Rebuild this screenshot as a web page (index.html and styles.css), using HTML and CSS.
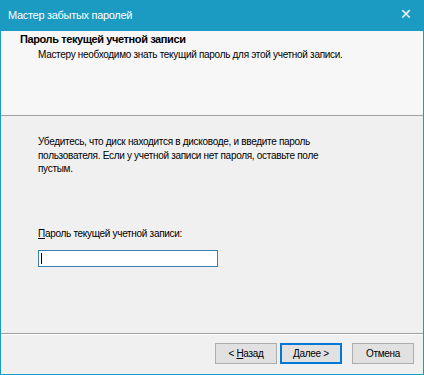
FILE: index.html
```
<!DOCTYPE html>
<html>
<head>
<title>Мастер забытых паролей</title>
<meta charset="utf-8">
<link rel="stylesheet" href="styles.css">
</head>
<body>
<div class=wnd>
 <div class=caption>
  <span class=ctitle>Мастер забытых паролей</span>
  <span class=cclose>&#x2715;</span>
 </div>
 <div class=head>
  <div class=htitle>Пароль текущей учетной записи</div>
  <div class=hsub>Мастеру необходимо знать текущий пароль для этой учетной записи.</div>
 </div>
 <div class=page>
  <p class=info>Убедитесь, что диск находится в дисководе, и введите пароль пользователя. Если у учетной записи нет пароля, оставьте поле пустым.</p>
  <label class=lbl><u>П</u>ароль текущей учетной записи:</label>
  <div class=edit><span class=caret></span></div>
 </div>
 <div class=foot>
  <button class=btn>&lt; <u>Н</u>азад</button>
  <button class="btn def"><u>Д</u>алее &gt;</button>
  <button class="btn cancel">Отмена</button>
 </div>
</div>
</body>
</html>
```
FILE: styles.css
```
html, body {margin:0; padding:0; background:#f0f0f0;}
body {font-family:"Liberation Sans", Arial, sans-serif; font-size:10px; letter-spacing:-0.3px; color:#000;}
.wnd {
 width:424px;
 height:375px;
 box-sizing:border-box;
 border:solid 1px #1b9ac2;
 border-top:none;
 display:flex;
 flex-direction:column;
 background:#f0f0f0;
}
.caption {
 height:31px;
 margin:0 -1px;
 background:#1b9ac2;
 color:#fff;
 display:flex;
 align-items:center;
 justify-content:space-between;
 padding:0 12px 0 8px;
 flex:none;
}
.ctitle {font-size:11px; letter-spacing:-0.3px; margin-top:-2px;}
.cclose {font-size:14px; margin-top:-4px; letter-spacing:0;}
.head {
 height:85px;
 box-sizing:border-box;
 background:#f7f7f7;
 border-bottom:solid 1px #a0a0a0;
 padding:2px 0 0 19px;
 flex:none;
}
.htitle {font-weight:bold; font-size:11px; letter-spacing:-0.4px; line-height:13px;}
.hsub {margin:2px 0 0 18px; line-height:13px;}
.page {
 flex:1;
 padding:19px 40px 0 37px;
 border-bottom:solid 1px #a0a0a0;
}
.info {margin:0; line-height:13.5px; width:300px;}
.lbl {display:block; margin-top:51px; line-height:13px;}
.edit {
 margin-top:10px;
 width:176px;
 height:15px;
 background:#fff;
 border:solid 1px #3c7fb1;
 display:flex;
 align-items:center;
 padding-left:2px;
}
.caret {width:1px; height:11px; background:#000;}
.foot {
 height:40px;
 flex:none;
 display:flex;
 align-items:center;
 justify-content:flex-end;
 padding:0 9px 2px 0;
 border-top:solid 1px #fff;
 box-sizing:border-box;
}
.btn {
 font:inherit;
 letter-spacing:-0.3px;
 width:62px;
 height:21px;
 margin-left:3px;
 background:#e1e1e1;
 border:solid 1px #adadad;
 padding:0;
 color:#000;
}
.btn.def {border-color:#0078d7; box-shadow:inset 0 0 0 1px #0078d7;}
.btn.cancel {margin-left:10px;}
u {text-decoration:underline;}
```
